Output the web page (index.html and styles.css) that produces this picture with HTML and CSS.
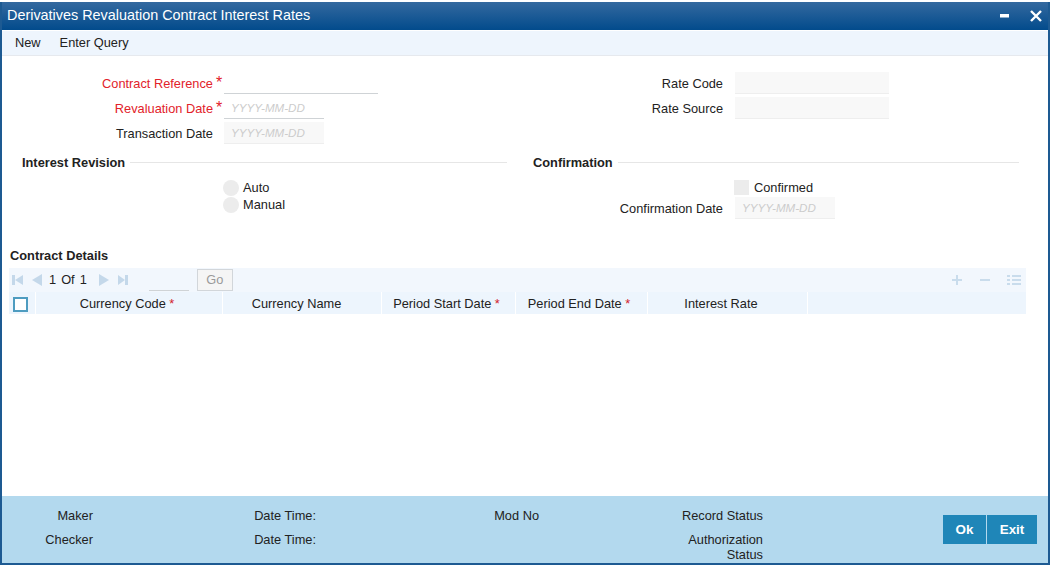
FILE: index.html
```html
<!DOCTYPE html>
<html lang="en">
<head>
<meta charset="utf-8">
<title>Derivatives Revaluation Contract Interest Rates</title>
<link rel="stylesheet" href="styles.css">
</head>
<body>
<div class="window">
  <header class="titlebar">
    <h1 class="title">Derivatives Revaluation Contract Interest Rates</h1>
    <div class="win-controls">
      <svg class="win-icon" width="14" height="14" viewBox="0 0 14 14"><rect x="2" y="5" width="9" height="3.5" fill="#fff"/></svg>
      <svg class="win-icon" width="14" height="14" viewBox="0 0 14 14"><path d="M2 2 L12 12 M12 2 L2 12" stroke="#fff" stroke-width="2.4" fill="none"/></svg>
    </div>
  </header>
  <nav class="toolbar"><span>New</span><span>Enter Query</span></nav>
  <main class="content">
    <section class="top-form">
      <div class="col-left">
        <div class="row"><label class="lbl req">Contract Reference</label><span class="star">*</span><div class="input wide line"></div></div>
        <div class="row"><label class="lbl req">Revaluation Date</label><span class="star">*</span><div class="input date line">YYYY-MM-DD</div></div>
        <div class="row"><label class="lbl">Transaction Date</label><span class="star"></span><div class="input date filled">YYYY-MM-DD</div></div>
      </div>
      <div class="col-right">
        <div class="row"><label class="lbl">Rate Code</label><div class="input wide filled"></div></div>
        <div class="row"><label class="lbl">Rate Source</label><div class="input wide filled"></div></div>
      </div>
    </section>
    <section class="groups">
      <div class="group group-left">
        <div class="group-head"><h2>Interest Revision</h2><hr></div>
        <div class="radios">
          <div class="radio"><i></i><span>Auto</span></div>
          <div class="radio"><i></i><span>Manual</span></div>
        </div>
      </div>
      <div class="group group-right">
        <div class="group-head"><h2>Confirmation</h2><hr></div>
        <div class="check"><i></i><span>Confirmed</span></div>
        <div class="row conf"><label class="lbl">Confirmation Date</label><div class="input date filled">YYYY-MM-DD</div></div>
      </div>
    </section>
    <section class="details">
      <h2 class="details-title">Contract Details</h2>
      <div class="pager">
        <svg class="pg pg-first" width="13" height="12" viewBox="0 0 13 12"><rect x="1" y="1" width="3" height="10"/><path d="M12 1V11L4 6Z"/></svg>
        <svg class="pg pg-prev" width="12" height="12" viewBox="0 0 12 12"><path d="M11 0V12L1 6Z"/></svg>
        <span class="pg-text">1</span><span class="pg-text">Of</span><span class="pg-text">1</span>
        <svg class="pg pg-next" width="12" height="12" viewBox="0 0 12 12"><path d="M1 0V12L11 6Z"/></svg>
        <svg class="pg pg-last" width="12" height="12" viewBox="0 0 12 12"><path d="M1 1V11L8 6Z"/><rect x="8" y="1" width="3" height="10"/></svg>
        <div class="pg-input"></div>
        <div class="go">Go</div>
        <div class="pg-actions">
          <svg width="12" height="12" viewBox="0 0 12 12"><path d="M6 1V11M1 6H11" stroke="#c9dcec" stroke-width="2" fill="none"/></svg>
          <svg width="12" height="12" viewBox="0 0 12 12"><path d="M1 6H11" stroke="#c9dcec" stroke-width="2" fill="none"/></svg>
          <svg width="14" height="12" viewBox="0 0 14 12"><path d="M0 2H3M5 2H14M0 6H3M5 6H14M0 10H3M5 10H14" stroke="#c9dcec" stroke-width="2" fill="none"/></svg>
        </div>
      </div>
      <div class="grid-head">
        <div class="cell c0"><i class="cb"></i></div>
        <div class="cell c1">Currency Code <b>*</b></div>
        <div class="cell c2">Currency Name</div>
        <div class="cell c3">Period Start Date <b>*</b></div>
        <div class="cell c4">Period End Date <b>*</b></div>
        <div class="cell c5">Interest Rate</div>
      </div>
    </section>
  </main>
  <footer class="footer">
    <div class="audit a1"><span>Maker</span><span>Checker</span></div>
    <div class="audit a2"><span>Date Time:</span><span>Date Time:</span></div>
    <div class="audit a3"><span>Mod No</span></div>
    <div class="audit a4"><span>Record Status</span><span>Authorization<br>Status</span></div>
    <div class="actions"><button>Ok</button><button>Exit</button></div>
  </footer>
</div>
</body>
</html>
```
FILE: styles.css
```css
* { box-sizing: border-box; }
html, body { margin: 0; padding: 0; background: #fff; }
body { font-family: "Liberation Sans", Arial, sans-serif; font-size: 12.8px; color: #222; }
.window {
  width: 1050px; margin-top: 2px;
  height: 563px;
  border-left: 2px solid #1d5a92; border-right: 2px solid #1d5a92; border-bottom: 2px solid #1d5a92;
  display: flex; flex-direction: column; background: #fff;
}
.titlebar {
  height: 28px; flex: none; display: flex; align-items: center; justify-content: space-between;
  background: linear-gradient(#34699f, #024b8c); padding: 0 5px 0 5px;
}
.title { margin: 0 0 2px; font-size: 14.4px; font-weight: 400; color: #fff; }
.win-controls { display: flex; gap: 17px; align-items: center; }
.win-icon { display: block; }
.toolbar {
  height: 26px; flex: none; display: flex; gap: 19px; align-items: center;
  background: #eef5fd; padding: 0 0 2px 13px; color: #222; font-size: 12.8px;
  border-top: 1px solid #fff; border-bottom: 1px solid #e6e9ee;
}
.content { flex: 1; min-height: 0; display: flex; flex-direction: column; }
.top-form { display: flex; padding-top: 16px; height: 89px; flex: none; }
.col-left { width: 521px; }
.col-right { flex: 1; }
.col-right .lbl { width: 200px; }
.col-right .input { margin-left: 12px; }
.row { display: flex; align-items: center; height: 22px; margin-bottom: 3px; }
.lbl { width: 211px; text-align: right; font-size: 12.8px; color: #222; }
.req { color: #e2222a; }
.star { width: 11px; color: #e2222a; font-size: 16px; padding-left: 3px; line-height: 1; }
.input { height: 22px; font-style: italic; font-size: 11.6px; color: #cccccc; padding: 4px 0 0 7px; }
.wide { width: 154px; }
.date { width: 100px; }
.line { border-bottom: 1px solid #cfd3d6; }
.filled { background: #f8f8f8; border-bottom: 1px solid #eeeeee; }
.groups { display: flex; height: 103px; flex: none; }
.group { position: relative; }
.group-left { width: 531px; padding-left: 20px; }
.group-right { flex: 1; }
.group-head { display: flex; align-items: center; height: 18px; margin-top: 8px; }
.group-head h2 { margin: 0; font-size: 12.8px; font-weight: 700; color: #222; white-space: nowrap; }
.group-head hr { flex: 1; margin: 0 0 0 5px; border: 0; border-top: 1px solid #e6e6e6; }
.group-left hr { margin-right: 26px; }
.group-right hr { margin-right: 29px; }
.radios { padding: 8px 0 0 201px; }
.radio { display: flex; align-items: center; height: 17px; gap: 4px; }
.radio i { width: 16px; height: 16px; border-radius: 50%; background: #ececec; display: block; }
.check { display: flex; align-items: center; height: 17px; gap: 5px; padding-left: 201px; margin-top: 8px; }
.check i { width: 15px; height: 15px; background: #ececec; display: block; }
.conf { margin-top: 1px; }
.conf .lbl { width: 190px; }
.conf .input { margin-left: 12px; }
.details { display: flex; flex-direction: column; }
.details-title { margin: -1px 0 0 8px; font-size: 12.8px; font-weight: 700; height: 18px; line-height: 18px; color: #222; }
.pager {
  margin: 3px 22px 0 7px; height: 24px; background: #f2f7fd; display: flex; align-items: center; padding-left: 2px;
}
.pg { fill: #c4d8ea; display: block; }
.pg-first { margin-right: 7px; }
.pg-prev { margin-right: 6px; }
.pg-next { margin: 0 7px 0 6px; }
.pg-last { margin-right: 0; }
.pg-text { font-size: 12.8px; color: #222; margin: -2px 5px 0 0; }
.pg-input { width: 40px; height: 22px; border-bottom: 1px solid #cfd3d6; margin-left: 20px; }
.go { margin-left: 8px; width: 36px; height: 22px; border: 1px solid #d2d6da; background: #f5f5f5; color: #9a9a9a; text-align: center; line-height: 20px; font-size: 12.8px; }
.pg-actions { margin-left: auto; display: flex; gap: 16px; align-items: center; padding-right: 5px; }
.pg-actions svg { display: block; }
.grid-head { margin: 0 22px 0 7px; height: 22px; background: #edf5fd; display: flex; align-items: center; }
.cell { height: 22px; line-height: 23px; text-align: center; font-size: 12.8px; color: #222; border-right: 1px solid #fff; white-space: nowrap; }
.cell b { color: #d2202a; font-weight: 400; }
.c0 { width: 27px; }
.c1 { width: 187px; padding-right: 4px; }
.c2 { width: 159px; padding-right: 11px; }
.c3 { width: 134px; padding-right: 4px; }
.c4 { width: 132px; padding-right: 5px; }
.c5 { width: 160px; padding-right: 13px; }
.cb { display: block; width: 15px; height: 15px; margin: 5px 0 0 4px; border: 2px solid #4e9cc0; background: #fff; }
.footer { height: 67px; flex: none; background: #b3d9ee; display: flex; position: relative; color: #222; }
.audit { display: flex; flex-direction: column; text-align: right; padding-top: 12px; gap: 9px; line-height: 15px; }
.a1 { width: 91px; }
.a2 { width: 223px; }
.a3 { width: 223px; }
.a4 { width: 224px; }
.actions { margin-left: auto; margin-right: 11px; margin-top: 19px; display: flex; gap: 1px; height: 29px; }
.actions button { border: 0; background: #1f86b8; color: #fff; font: 700 13.4px "Liberation Sans", Arial, sans-serif; height: 29px; padding: 0; }
.actions button:first-child { width: 43px; }
.actions button:last-child { width: 50px; }
```
